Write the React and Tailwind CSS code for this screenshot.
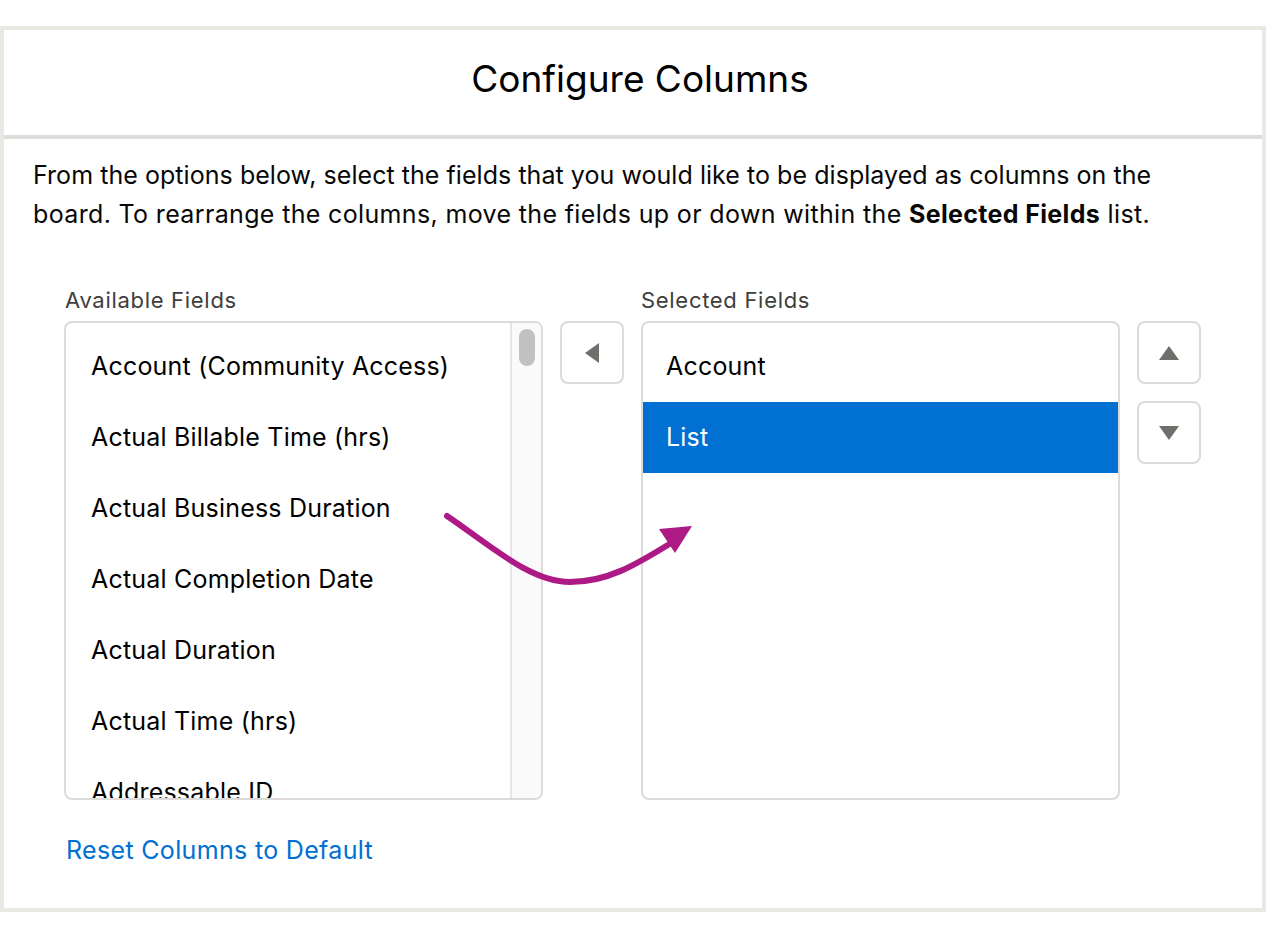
import React from 'react';

const available = [
  'Account (Community Access)',
  'Actual Billable Time (hrs)',
  'Actual Business Duration',
  'Actual Completion Date',
  'Actual Duration',
  'Actual Time (hrs)',
  'Addressable ID',
  'Agreement',
];

const selected = ['Account', 'List'];

const Triangle = ({ dir }) => {
  const pts = {
    left: '14,0 14,20 0,10',
    up: '10,0 20,14 0,14',
    down: '0,0 20,0 10,14',
  }[dir];
  const size = dir === 'left' ? { w: 14, h: 20 } : { w: 20, h: 14 };
  return (
    <svg width={size.w} height={size.h} viewBox={`0 0 ${size.w} ${size.h}`}>
      <polygon points={pts} fill="#706e6b" />
    </svg>
  );
};

const IconButton = ({ dir }) => (
  <button className="w-[64px] h-[63px] rounded-[8px] border-2 border-[#dddbda] bg-white flex items-center justify-center">
    <Triangle dir={dir} />
  </button>
);

const App = () => {
  return (
    <div
      className="relative bg-white h-[932px] w-[1266px] pt-[26px] text-[#080707]"
      style={{ fontFamily: 'Inter, "Noto Sans", sans-serif' }}
    >
      <div className="h-[886px] border-4 border-[#e9e9e4] flex flex-col">
        <div className="h-[109px] pb-[8px] pl-[14px] flex items-center justify-center border-b-4 border-[#dfdcdb]">
          <h1 className="text-[37px] font-normal text-black">Configure Columns</h1>
        </div>

        <div className="pt-[17px] px-[29px]">
          <p className="text-[25px] leading-[39px] tracking-[0.05px]">
            From the options below, select the fields that you would like to be displayed as columns on the
            <br />
            <span className="tracking-[0.35px]">
              board. To rearrange the columns, move the fields up or down within the{' '}
              <span className="font-bold">Selected Fields</span> list.
            </span>
          </p>
        </div>

        <div className="mt-[51px] px-[60px] flex gap-[17px]">
          <div className="flex flex-col w-[479px]">
            <div className="text-[22px] leading-[30px] tracking-[0.7px] text-[#3e3e3c] mb-[6px] pl-[1px]">Available Fields</div>
            <div className="relative h-[479px] rounded-[8px] border-2 border-[#dddbda] overflow-hidden flex">
              <ul className="flex-1 pt-[8px]">
                {available.map(item => (
                  <li key={item} className="h-[71px] flex items-center pl-[25px] text-[25px] tracking-[0.2px] text-black">
                    {item}
                  </li>
                ))}
              </ul>
              <div className="w-[31px] bg-[#fafafa] border-l-2 border-[#e6e4e4] pt-[6px] flex justify-center">
                <div className="w-[16px] h-[37px] rounded-full bg-[#c1c1c1]" />
              </div>
            </div>
          </div>

          <div className="pt-[36px]">
            <IconButton dir="left" />
          </div>

          <div className="flex flex-col w-[479px]">
            <div className="text-[22px] leading-[30px] tracking-[0.7px] text-[#3e3e3c] mb-[6px]">Selected Fields</div>
            <div className="h-[479px] rounded-[8px] border-2 border-[#dddbda] overflow-hidden">
              <ul className="pt-[8px]">
                {selected.map(item => (
                  <li
                    key={item}
                    className={
                      item === 'List'
                        ? 'h-[71px] flex items-center pl-[23px] text-[25px] tracking-[0.2px] bg-[#0070d2] text-white'
                        : 'h-[71px] flex items-center pl-[23px] text-[25px] tracking-[0.2px] text-black'
                    }
                  >
                    {item}
                  </li>
                ))}
              </ul>
            </div>
          </div>

          <div className="pt-[36px] flex flex-col gap-[17px]">
            <IconButton dir="up" />
            <IconButton dir="down" />
          </div>
        </div>

        <div className="px-[62px] mt-[32px]">
          <a className="text-[25px] leading-[36px] tracking-[0.33px] text-[#0070d2] cursor-pointer">Reset Columns to Default</a>
        </div>
      </div>

      <svg
        className="absolute left-0 top-0 pointer-events-none"
        width="1266"
        height="932"
        viewBox="0 0 1266 932"
      >
        <path
          d="M447 516 C 490 545, 530 582, 570 582 C 610 582, 640 562, 676 540"
          fill="none"
          stroke="#ad1a86"
          strokeWidth="6"
          strokeLinecap="round"
        />
        <polygon points="692,526 659,529 675,553" fill="#ad1a86" />
      </svg>
    </div>
  );
};

export default App;
